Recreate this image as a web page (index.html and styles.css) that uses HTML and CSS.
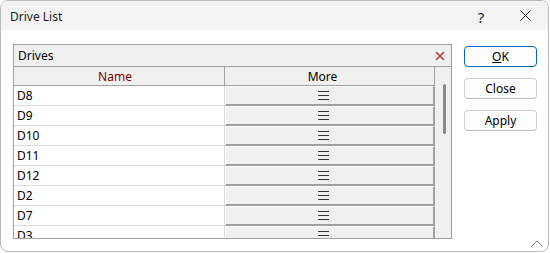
FILE: index.html
```html
<!DOCTYPE html>
<html lang="en">
<head>
  <meta charset="UTF-8">
  <meta name="viewport" content="width=device-width, initial-scale=1.0">
  <title>Drive List</title>
  <link rel="stylesheet" href="styles.css">
</head>
<body>
  <div class="window">
    <div class="titlebar">
      <span class="title">Drive List</span>
      <span class="tb-btn help">?</span>
      <span class="tb-btn">
        <svg width="11" height="11" viewBox="0 0 11 11">
          <path d="M0.5 0.5 L10.5 10.5 M10.5 0.5 L0.5 10.5" stroke="#1a1a1a" stroke-width="1" fill="none"/>
        </svg>
      </span>
    </div>

    <div class="content">
      <div class="panel">
        <div class="panel-head">
          <span>Drives</span>
          <svg class="clear" width="10" height="10" viewBox="0 0 10 10">
            <path d="M1 1 L9 9 M9 1 L1 9" stroke="#c0392b" stroke-width="1.6" fill="none"/>
          </svg>
        </div>
        <div class="panel-main">
          <div class="grid">
            <div class="colhead">
              <div class="col-name">Name</div>
              <div class="col-more">More</div>
            </div>
            <div class="rows" id="rows"></div>
          </div>
          <div class="scroll">
            <div class="thumb"></div>
          </div>
        </div>
      </div>

      <div class="buttons">
        <button class="btn default"><u>O</u>K</button>
        <button class="btn">Close</button>
        <button class="btn">Apply</button>
      </div>
    </div>

    <div class="footer">
      <svg width="12" height="7" viewBox="0 0 12 7">
        <path d="M0.5 6.5 L6 1 L11.5 6.5" stroke="#7a7a7a" stroke-width="1" fill="none"/>
      </svg>
    </div>
  </div>

  <script>
    const drives = ['D8', 'D9', 'D10', 'D11', 'D12', 'D2', 'D7', 'D3'];
    const rows = document.getElementById('rows');

    drives.forEach((name) => {
      const row = document.createElement('div');
      row.className = 'row';
      row.innerHTML =
        '<div class="cell-name">' + name + '</div>' +
        '<div class="cell-more"><span class="burger"><i></i><i></i><i></i></span></div>';
      rows.appendChild(row);
    });
  </script>
</body>
</html>
```

FILE: styles.css
```css
body {
  margin: 0;
  background: #ffffff;
  font-family: "Noto Sans", sans-serif;
  font-size: 12px;
  color: #000;
}
.window {
  width: 549px;
  height: 252px;
  box-sizing: border-box;
  border: 1px solid #bababa;
  border-radius: 8px;
  overflow: hidden;
  display: flex;
  flex-direction: column;
  background: #fff;
}
.titlebar {
  height: 29px;
  flex: none;
  display: flex;
  align-items: center;
  background: #f3f3f3;
  padding-left: 9px;
}
.title {
  flex: 1;
  color: #1a1a1a;
  padding-top: 2px;
}
.tb-btn {
  width: 46px;
  height: 29px;
  display: flex;
  align-items: center;
  justify-content: center;
}
.help {
  font-size: 15px;
  padding: 2px 0 0 4px;
  box-sizing: border-box;
  color: #1a1a1a;
}
.content {
  flex: none;
  height: 209px;
  box-sizing: border-box;
  padding: 14px 0 0 12px;
  display: flex;
  gap: 12px;
}
.panel {
  width: 439px;
  height: 195px;
  box-sizing: border-box;
  border: 1px solid #a0a0a0;
  display: flex;
  flex-direction: column;
}
.panel-head {
  height: 22px;
  flex: none;
  box-sizing: border-box;
  border-bottom: 1px solid #a0a0a0;
  background: #f0f0f0;
  display: flex;
  align-items: center;
  justify-content: space-between;
  padding: 0 6px 0 4px;
}
.panel-main {
  flex: 1;
  display: flex;
  overflow: hidden;
}
.grid {
  width: 421px;
  overflow: hidden;
}
.colhead {
  display: flex;
  height: 19px;
  box-sizing: border-box;
  border-bottom: 1px solid #a0a0a0;
  background: #f0f0f0;
}
.col-name,
.col-more {
  display: flex;
  align-items: center;
  justify-content: center;
  box-sizing: border-box;
  border-right: 1px solid #a0a0a0;
}
.col-name {
  width: 211px;
  color: #800000;
  padding-right: 8px;
}
.col-more {
  width: 210px;
  padding-right: 14px;
}
.row {
  display: flex;
  height: 20px;
}
.cell-name {
  width: 211px;
  box-sizing: border-box;
  border-right: 1px solid #dcdcdc;
  border-bottom: 1px solid #dcdcdc;
  padding-left: 3px;
  display: flex;
  align-items: center;
}
.cell-more {
  width: 210px;
  box-sizing: border-box;
  background: #f0f0f0;
  border-top: 1px solid #fff;
  border-left: 1px solid #fff;
  border-bottom: 2px solid #a0a0a0;
  border-right: 2px solid #a0a0a0;
  display: flex;
  align-items: center;
  justify-content: center;
  padding-right: 12px;
}
.burger {
  display: flex;
  flex-direction: column;
  gap: 3px;
  width: 11px;
}
.burger i {
  display: block;
  height: 1px;
  background: #333;
}
.scroll {
  width: 16px;
  background: #f0f0f0;
  padding: 17px 0 0 8px;
  box-sizing: border-box;
}
.thumb {
  width: 3px;
  height: 50px;
  background: #8a8a8a;
  border-radius: 2px;
}
.buttons {
  display: flex;
  flex-direction: column;
  gap: 11px;
  padding-top: 2px;
}
.btn {
  width: 73px;
  height: 21px;
  box-sizing: border-box;
  padding: 0;
  border: 1px solid #d0d0d0;
  border-bottom-color: #bcbcbc;
  border-radius: 4px;
  background: #fdfdfd;
  font-family: inherit;
  font-size: 12px;
  color: #000;
}
.btn.default {
  border: 1px solid #0067c0;
}
.footer {
  flex: 1;
  display: flex;
  justify-content: flex-end;
  padding: 1px 5px 0 0;
}
```
